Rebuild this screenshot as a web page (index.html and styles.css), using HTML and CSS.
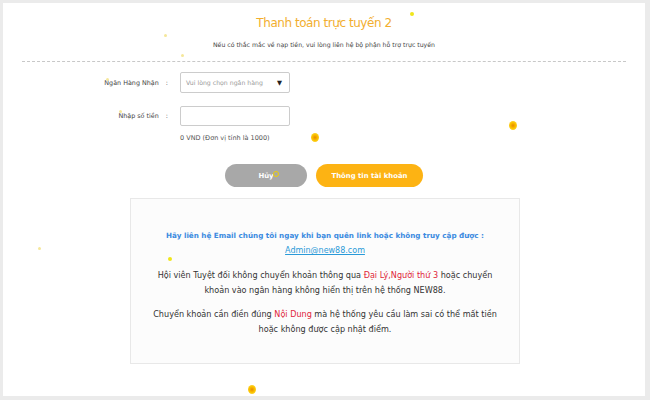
FILE: index.html
```html
<!DOCTYPE html>
<html lang="vi">
<head>
<meta charset="UTF-8">
<meta name="viewport" content="width=device-width, initial-scale=1.0">
<title>Thanh toán trực tuyến 2</title>
<link rel="stylesheet" href="styles.css">
</head>
<body>
<div class="page">
  <div class="header">
    <h1>Thanh toán trực tuyến 2</h1>
    <p class="sub">Nếu có thắc mắc về nạp tiền, vui lòng liên hệ bộ phận hỗ trợ trực tuyến</p>
  </div>
  <div class="form">
    <div class="row">
      <label>Ngân Hàng Nhận <b>:</b></label>
      <div class="select">
        <span>Vui lòng chọn ngân hàng</span>
        <span class="caret">&#9660;</span>
      </div>
    </div>
    <div class="row">
      <label>Nhập số tiền <b>:</b></label>
      <input type="text" class="amount">
    </div>
    <div class="row">
      <span></span>
      <span class="hint">0 VND (Đơn vị tính là 1000)</span>
    </div>
  </div>
  <div class="actions">
    <button class="btn btn-cancel">Hủy</button>
    <button class="btn btn-main">Thông tin tài khoản</button>
  </div>
  <div class="notice">
    <p class="contact">Hãy liên hệ Email chúng tôi ngay khi bạn quên link hoặc không truy cập được :<br><a href="#">Admin@new88.com</a></p>
    <p>Hội viên Tuyệt đối không chuyển khoản thông qua <span class="red">Đại Lý,Người thứ 3</span> hoặc chuyển<br>khoản vào ngân hàng không hiển thị trên hệ thống NEW88.</p>
    <p>Chuyển khoản cần điền đúng <span class="red">Nội Dung</span> mà hệ thống yêu cầu làm sai có thể mất tiền<br>hoặc không được cập nhật điểm.</p>
  </div>

  <!-- falling flowers -->
  <i class="dot" style="left:407px;top:9px"></i>
  <i class="dot small" style="left:161px;top:31px"></i>
  <i class="dot small" style="left:178px;top:51px"></i>
  <i class="dot small" style="left:103px;top:75px"></i>
  <i class="dot small" style="left:116px;top:107px"></i>
  <i class="flower" style="left:308px;top:130px"></i>
  <i class="flower" style="left:506px;top:118px"></i>
  <i class="dot small" style="left:35px;top:244px"></i>
  <i class="dot" style="left:165px;top:254px"></i>
  <i class="flower" style="left:245px;top:382px"></i>
  <i class="ring" style="left:270px;top:168px"></i>
</div>
</body>
</html>
```

FILE: styles.css
```css
body { margin: 0; padding: 0; background: #ebebeb; font-family: Tahoma, "DejaVu Sans", sans-serif; color: #333; }
.page { position: relative; margin: 3px 5px 0 3px; height: 393px; background: #fff; overflow: hidden; }

.header { text-align: center; padding-top: 13px; border-bottom: 1px dashed #c8c8c8; margin: 0 19px; padding-bottom: 13px; }
h1 { margin: 0; font-size: 12px; font-weight: normal; color: #f2ae2e; letter-spacing: -0.45px; }
.sub { margin: 11px 0 0; font-size: 6.2px; color: #444; }

.form { display: grid; grid-template-columns: 177px 110px; row-gap: 13px; padding-top: 10px; }
.row { display: contents; }
.form label { text-align: right; font-size: 6.4px; color: #444; align-self: center; padding-right: 12px; }
.form label b { font-weight: normal; margin-left: 5px; }
.select { height: 19px; border: 1px solid #ccc; border-radius: 2px; display: flex; align-items: center; justify-content: space-between; padding: 0 7px 0 5px; font-size: 6.2px; color: #999; white-space: nowrap; }
.select .caret { color: #222; font-size: 6.5px; }
.amount { margin: 0; width: 110px; height: 20px; box-sizing: border-box; border: 1px solid #ccc; border-radius: 2px; padding: 0; }
.hint { margin-top: -5px; font-size: 6.5px; color: #555; }

.actions { display: flex; justify-content: center; gap: 9px; margin-top: 22px; }
.btn { height: 23px; border: none; border-radius: 12px; color: #fff; font-family: inherit; font-size: 6.9px; font-weight: bold; }
.btn-cancel { width: 82px; background: #a8a8a8; }
.btn-main { width: 107px; background: #fdb313; }

.notice { width: 390px; margin: 11px 0 0 127px; height: 166px; box-sizing: border-box; border: 1px solid #e8e8e8; background: #fcfcfc; text-align: center; padding-top: 29px; font-size: 8.1px; line-height: 14.5px; white-space: nowrap; }
.notice p { margin: 0 0 10px; }
.contact { color: #3a8ae0; font-weight: bold; font-size: 7.2px; line-height: 15px; }
.contact a { color: #2a9ad8; font-size: 8px; font-weight: normal; text-decoration: underline; }
.red { color: #e0253a; }

.dot { position: absolute; width: 4px; height: 4px; border-radius: 50%; background: #f0e61a; }
.dot.small { width: 3px; height: 3px; background: #f5e79a; }
.flower { position: absolute; width: 8px; height: 9px; border-radius: 50%; background: radial-gradient(circle, #e88a00 0, #fbc400 50%, #fde06a 100%); }
.ring { position: absolute; width: 4px; height: 4px; border: 1px solid #f0d000; border-radius: 50%; }
```
